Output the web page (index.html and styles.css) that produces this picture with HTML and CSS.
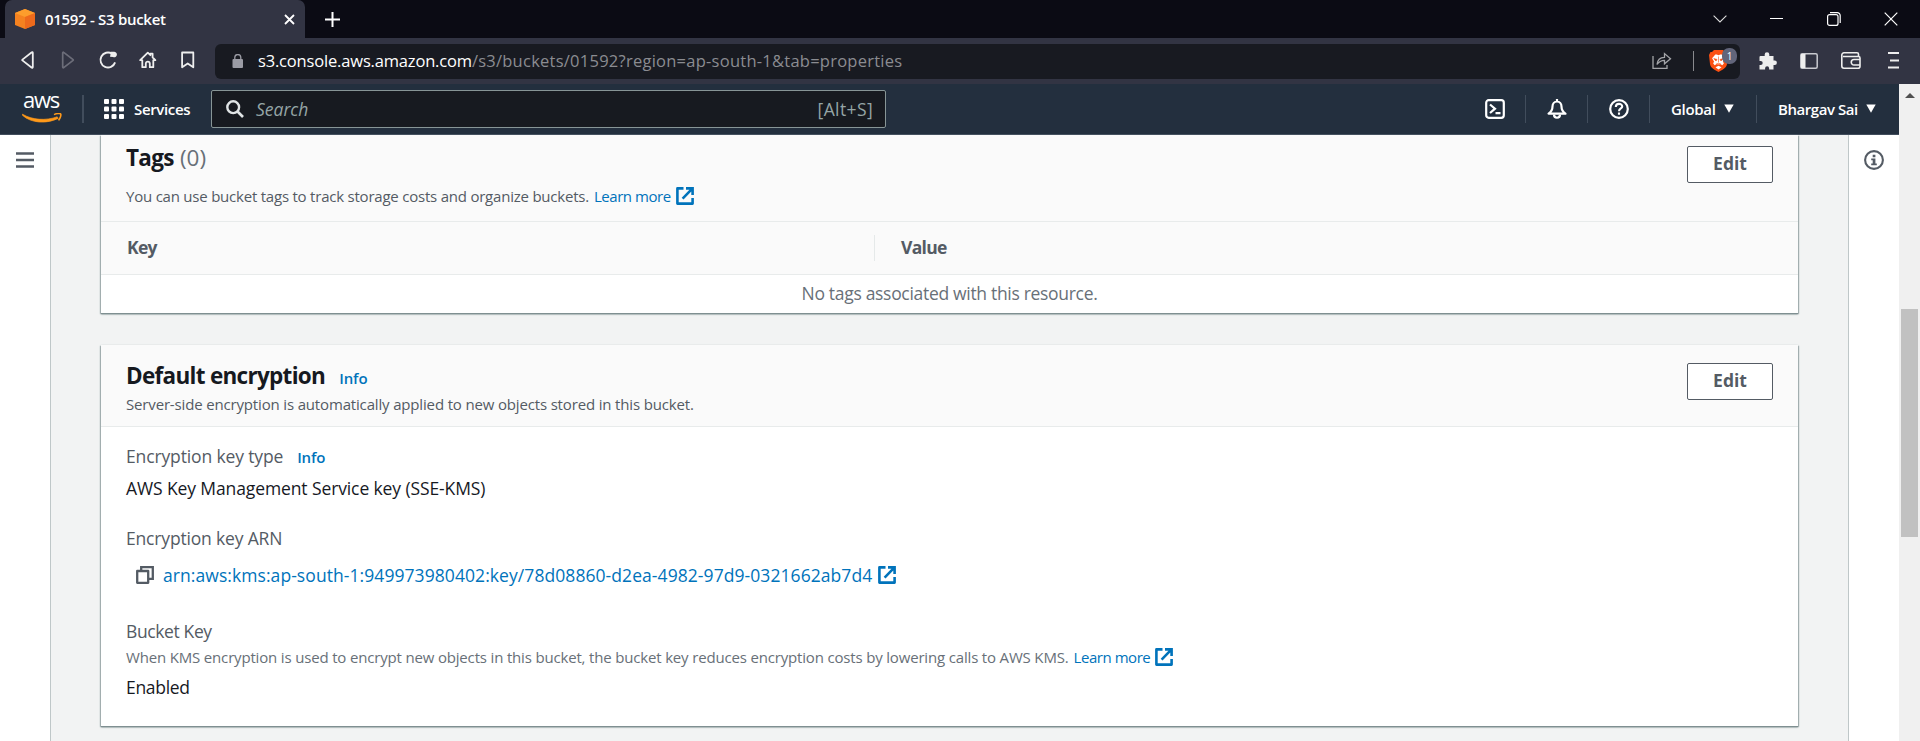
FILE: index.html
```html
<!DOCTYPE html>
<html lang="en">
<head>
<meta charset="utf-8">
<title>01592 - S3 bucket</title>
<link rel="stylesheet" href="styles.css">
</head>
<body>
<svg class="defs" aria-hidden="true">
  <symbol id="external" viewBox="0 0 18 18">
    <path d="M7.5 1.4H1.4v15.2h15.2V11" fill="none" stroke="currentColor" stroke-width="2.6" stroke-linejoin="round"/>
    <path d="M10 1.4h6.6V8M16.3 1.7 6.6 11.6" fill="none" stroke="currentColor" stroke-width="2.6"/>
  </symbol>
  <symbol id="caret" viewBox="0 0 10 9"><path d="M.3.5h9.4L5 8.7z" fill="#fff"/></symbol>
</svg>

<div class="tabstrip">
  <div class="tab">
    <svg class="favicon" width="20" height="20" viewBox="0 0 20 20">
      <path d="M10 0 20 4v12l-10 4L0 16V4z" fill="#f58220"/>
      <path d="M10 0 20 4 10 8 0 4z" fill="#fd9d2c"/>
      <path d="M20 4v12l-10 4V8z" fill="#ee6a1c"/>
    </svg>
    <span class="tab-title">01592 - S3 bucket</span>
    <svg class="tab-close" width="11" height="11" viewBox="0 0 11 11"><path d="M1 1l9 9M10 1l-9 9" stroke="#fff" stroke-width="1.8"/></svg>
  </div>
  <svg class="new-tab" width="15" height="15" viewBox="0 0 15 15"><path d="M7.5 0v15M0 7.5h15" stroke="#fff" stroke-width="2"/></svg>
  <div class="window-controls">
    <svg width="14" height="8" viewBox="0 0 14 8"><path d="M.6.6 7 7 13.4.6" fill="none" stroke="#ddd" stroke-width="1.1"/></svg>
    <svg width="13" height="14" viewBox="0 0 13 14"><path d="M0 6.5h13" stroke="#fff"/></svg>
    <svg width="14" height="14" viewBox="0 0 14 14"><rect x=".6" y="2.6" width="10.4" height="10.8" rx="2" fill="none" stroke="#fff" stroke-width="1.2"/><path d="M3 .6h7.2a3 3 0 0 1 3 3V11" fill="none" stroke="#fff" stroke-width="1.2"/></svg>
    <svg width="14" height="14" viewBox="0 0 14 14"><path d="M.7.7l12.6 12.6M13.3.7.7 13.3" stroke="#fff" stroke-width="1.2"/></svg>
  </div>
</div>

<div class="toolbar">
  <div class="browser-nav">
    <svg width="20" height="20" viewBox="0 0 20 20"><path d="M14.8 2.7v14.6a.6.6 0 0 1-1 .4L4.4 10.400a.5.5 0 0 1 0-.8l9.400-7.300a.6.6 0 0 1 1 .4z" fill="none" stroke="#eee" stroke-width="1.8"/></svg>
    <svg width="20" height="20" viewBox="0 0 20 20"><path d="M4.700 2.700v14.600a.6.6 0 0 0 1 .4l9.400-7.300a.5.5 0 0 0 0-.8L5.700 2.300a.6.6 0 0 0-1 .4z" fill="none" stroke="#6c6d79" stroke-width="1.700"/></svg>
    <svg width="20" height="20" viewBox="0 0 20 20"><path d="M14 3.600A7.500 7.500 0 1 0 17.100 12.400" fill="none" stroke="#eee" stroke-width="1.900"/><path d="M13 1.800h2.500a2.800 2.800 0 1 1-.5 5.300l-3-.3z" fill="#eee"/></svg>
    <svg width="20" height="20" viewBox="0 0 20 20"><path d="M2.200 10.200 9.800 2.700l2.600 2.500V3.700h2.200v3.700l2.800 2.800h-2.100v7h-3.500v-3.600a2 2 0 0 0-4 0v3.600H4.300v-7z" fill="none" stroke="#eee" stroke-width="1.800" stroke-linejoin="round"/></svg>
    <svg width="20" height="20" viewBox="0 0 20 20"><path d="M4.100 2.500h11.200v14.800L9.700 13.400l-5.600 3.900z" fill="none" stroke="#eee" stroke-width="1.800" stroke-linejoin="round"/></svg>
  </div>
  <div class="address">
    <svg class="lock" width="12" height="14" viewBox="0 0 12 14"><rect x=".5" y="5" width="10.500" height="9" rx="1" fill="#9b9ca5"/><path d="M2.800 5.500V3.600a3 3 0 0 1 6 0v1.900" fill="none" stroke="#9b9ca5" stroke-width="1.300"/></svg>
    <span class="host">s3.console.aws.amazon.com</span><span class="path">/s3/buckets/01592?region=ap-south-1&amp;tab=properties</span>
    <svg class="share" width="20" height="18" viewBox="0 0 20 18"><path d="M1 4v12.300h14V13M5 12.500c.4-4.600 3-7 7.500-7.200V1.600l6 5.200-6 5V8.300c-3.600 0-5.700 1.400-7.500 4.200z" fill="none" stroke="#a3a4a8" stroke-width="1.300"/></svg>
    <span class="address-divider"></span>
    <div class="shield">
      <svg width="19" height="22" viewBox="0 0 19 22"><path d="M5 0h9l2 2h1.500L19 5l-1 9c-.5 3-2 4.500-8.500 8C3 18.500 1.500 17 1 14L0 5l1.500-3H3z" fill="#fb5012"/><path d="M6.300 4.600h1.500l1.700.7 1.700-.7h1.500l3.200 3.700-2 3.500 1 1.400-1.500 2-2.200-1.200-1.700.9-1.700-.9-2.200 1.200-1.500-2 1-1.400-2-3.500zM9.500 15.700l3 1.600-3 2.200-3-2.200z" fill="#fff"/><path d="M4.800 8.600l3.200.8-1 1.600zM14.200 8.600l-3.200.8 1 1.600zM9.500 6.500v6M7.500 13.500l2 1 2-1" fill="#fb5012" stroke="#fb5012" stroke-width=".6"/></svg>
      <span class="badge">1</span>
    </div>
  </div>
  <div class="extensions">
    <svg width="18" height="18" viewBox="0 0 18 18"><path d="M1.500 4h4.200V2.500a2.300 2.300 0 0 1 4.600 0V4h4.200v4.500h1.200a2.200 2.200 0 0 1 0 4.400h-1.200V17.500h-4.400v-1.300a2 2 0 0 0-4 0v1.300H.5V13h1.200a2 2 0 0 0 0-4H.5V5a1 1 0 0 1 1-1z" fill="#eee"/></svg>
    <svg width="18" height="16" viewBox="0 0 18 16"><rect x=".8" y=".8" width="16.400" height="14.400" rx="1.500" fill="none" stroke="#c9cad0" stroke-width="1.500"/><path d="M1 1h4.500v14H1z" fill="#eee"/></svg>
    <svg width="20" height="17" viewBox="0 0 20 17"><path d="M17.500 5V2.300a1.500 1.500 0 0 0-1.500-1.500H3A2.200 2.200 0 0 0 .8 3v11A2.200 2.200 0 0 0 3 16.200h14a2 2 0 0 0 2-2V6a1.500 1.500 0 0 0-1.500-1.500H2M19 7.500h-6a2.500 2.500 0 0 0 0 5.500h6" fill="none" stroke="#eee" stroke-width="1.600"/></svg>
    <svg class="menu" width="11" height="17" viewBox="0 0 11 17"><path d="M0 1h11M2 8.500h9M0 15.500h11" stroke="#eee" stroke-width="1.800"/></svg>
  </div>
</div>

<div class="viewport">
  <div class="console">
    <header class="topnav">
      <div class="aws-logo">
        <span class="aws-word">aws</span>
        <svg class="smile" width="40" height="10" viewBox="0 0 40 10"><path d="M.5 1.200C10 7 24 8 35.200 3.800l1 1.600C25 11 9 10.500.2 2z" fill="#ff9a1a" stroke="#ff9a1a" stroke-width=".7"/><path d="M32 1.600c3-1.400 6-1.200 6.700-.6.500 1-.3 4.500-2.200 6.300" fill="none" stroke="#ff9a1a" stroke-width="1.600"/></svg>
      </div>
      <span class="nav-divider bold"></span>
      <svg class="grid-icon" width="20" height="20" viewBox="0 0 20 20" fill="#fff"><rect width="5" height="5" rx="1"/><rect x="7.500" width="5" height="5" rx="1"/><rect x="15" width="5" height="5" rx="1"/><rect y="7.500" width="5" height="5" rx="1"/><rect x="7.500" y="7.500" width="5" height="5" rx="1"/><rect x="15" y="7.500" width="5" height="5" rx="1"/><rect y="15" width="5" height="5" rx="1"/><rect x="7.500" y="15" width="5" height="5" rx="1"/><rect x="15" y="15" width="5" height="5" rx="1"/></svg>
      <span class="nav-text services">Services</span>
      <div class="search">
        <svg width="18" height="18" viewBox="0 0 18 18"><circle cx="7.200" cy="7.200" r="5.900" fill="none" stroke="#e0e4e6" stroke-width="2.400"/><path d="M11.500 11.500l5.500 5.500" stroke="#e0e4e6" stroke-width="2.600"/></svg>
        <span class="placeholder">Search</span>
        <span class="shortcut">[Alt+S]</span>
      </div>
      <div class="nav-right">
        <svg class="nav-icon first" width="20" height="20" viewBox="0 0 20 20"><rect x="1.200" y="1.200" width="17.600" height="17.600" rx="2.500" fill="none" stroke="#fff" stroke-width="2.200"/><path d="M5 5.500 10 9.700 5 14M10.500 14.200h5" fill="none" stroke="#fff" stroke-width="2.200"/></svg>
        <span class="nav-divider"></span>
        <svg class="nav-icon" width="20" height="20" viewBox="0 0 20 20"><path d="M1.500 14.600c3-1.700 4-3.600 4-7C5.500 4.500 7.500 2.500 10 2.500s4.500 2 4.500 5.100c0 3.400 1 5.300 4 7zM10 0v3" fill="none" stroke="#fff" stroke-width="2.200" stroke-linejoin="round"/><path d="M7 15.500c0 4.300 6 4.300 6 0" fill="none" stroke="#fff" stroke-width="2.200"/></svg>
        <span class="nav-divider"></span>
        <svg class="nav-icon" width="20" height="20" viewBox="0 0 20 20"><circle cx="10" cy="10" r="8.800" fill="none" stroke="#fff" stroke-width="2.200"/><path d="M6.800 8c0-4.200 6.400-4 6.400-.5 0 2-3.200 2-3.200 4.700M10 13.600v2.200" fill="none" stroke="#fff" stroke-width="2.100"/></svg>
        <span class="nav-divider"></span>
        <span class="nav-text region">Global</span>
        <svg class="caret" width="10" height="9"><use href="#caret"/></svg>
        <span class="nav-divider"></span>
        <span class="nav-text account">Bhargav Sai</span>
        <svg class="caret" width="10" height="9"><use href="#caret"/></svg>
      </div>
    </header>

    <div class="workspace">
      <aside class="rail left">
        <svg width="18" height="16" viewBox="0 0 18 16"><path d="M0 1.500h18M0 8h18M0 14.500h18" stroke="#545b64" stroke-width="2.400"/></svg>
      </aside>
      <main class="content">
        <section class="card tags">
          <div class="card-head">
            <div>
              <h2 class="heading">Tags <span class="count">(0)</span></h2>
              <p class="description"><span class="tags-copy">You can use bucket tags to track storage costs and organize buckets.</span><a class="learn">Learn more</a><svg class="external" width="18" height="18"><use href="#external"/></svg></p>
            </div>
            <button class="edit">Edit</button>
          </div>
          <div class="table-head">
            <div class="col-key">Key</div>
            <div class="col-value">Value</div>
          </div>
          <div class="empty">No tags associated with this resource.</div>
        </section>

        <section class="card encryption">
          <div class="card-head">
            <div>
              <h2 class="heading">Default encryption<a class="info">Info</a></h2>
              <p class="description">Server-side encryption is automatically applied to new objects stored in this bucket.</p>
            </div>
            <button class="edit">Edit</button>
          </div>
          <div class="card-body">
            <div class="label">Encryption key type<a class="info">Info</a></div>
            <div class="value type-value">AWS Key Management Service key (SSE-KMS)</div>
            <div class="label arn-label">Encryption key ARN</div>
            <div class="arn">
              <svg width="18" height="18" viewBox="0 0 18 18"><path d="M5.200 4V1.200h11.600v11.600H13" fill="none" stroke="#545b64" stroke-width="2.300"/><rect x="1.200" y="5" width="11" height="11.800" fill="none" stroke="#545b64" stroke-width="2.300" stroke-linejoin="round"/></svg>
              <a class="arn-link">arn:aws:kms:ap-south-1:949973980402:key/78d08860-d2ea-4982-97d9-0321662ab7d4</a>
              <svg class="external" width="18" height="18"><use href="#external"/></svg>
            </div>
            <div class="label bucket-label">Bucket Key</div>
            <p class="hint">When KMS encryption is used to encrypt new objects in this bucket, the bucket key reduces encryption costs by lowering calls to AWS KMS.<a class="learn">Learn more</a><svg class="external" width="18" height="18"><use href="#external"/></svg></p>
            <div class="value enabled">Enabled</div>
          </div>
        </section>
      </main>
      <aside class="rail right">
        <svg width="20" height="20" viewBox="0 0 20 20"><circle cx="10" cy="10" r="8.900" fill="none" stroke="#545b64" stroke-width="2.100"/><path d="M8.700 4.800h2.700v2.400H8.700zM7.200 8.400h4.200v5h1.400v1.800H7.200v-1.800h1.500v-3.200H7.200z" fill="#545b64"/></svg>
      </aside>
    </div>
  </div>
  <div class="scrollbar">
    <svg width="10" height="5" viewBox="0 0 10 5"><path d="M0 5 5 0l5 5z" fill="#505050"/></svg>
    <div class="thumb"></div>
  </div>
</div>
</body>
</html>
```

FILE: styles.css
```css
* { box-sizing: border-box; }
body { margin: 0; height: 741px; overflow: hidden; display: flex; flex-direction: column; font-family: "Open Sans", "Noto Sans", sans-serif; color: #16191f; background: #f2f3f3; }
h2, p { margin: 0; }
svg { display: block; flex: none; }
.defs { position: absolute; width: 0; height: 0; }

/* Browser chrome */
.tabstrip { height: 38px; flex: none; background: #0b0b14; display: flex; align-items: center; padding-left: 5px; }
.tab { width: 300px; height: 38px; background: #323443; border-radius: 7px 7px 0 0; display: flex; align-items: center; padding: 0 10px 0 10px; }
.tab-title { margin-left: 10px; padding-bottom: 1px; flex: 1; font-size: 15px; line-height: 20px; font-weight: 600; letter-spacing: -0.3px; color: #fff; }
.new-tab { margin-left: 20px; }
.window-controls { margin-left: auto; display: flex; align-items: center; width: 185px; justify-content: space-between; margin-right: 22px; }
.toolbar { height: 46px; flex: none; background: #323443; display: flex; align-items: center; }
.browser-nav { display: flex; gap: 20px; width: 215px; padding-left: 18px; margin-top: -2px; }
.address { width: 1525px; height: 35px; background: #181a21; border-radius: 6px; display: flex; align-items: center; font-size: 16.5px; line-height: 24px; }
.lock { margin: 0 14px 0 17px; }
.host { color: #fff; letter-spacing: -0.17px; white-space: nowrap; padding-bottom: 1px; }
.path { color: #8b8c91; letter-spacing: 0.25px; white-space: nowrap; padding-bottom: 1px; }
.share { margin-left: auto; }
.address-divider { width: 1px; height: 20px; background: #898a8e; margin: 0 15px 0 21px; }
.shield { position: relative; width: 31px; height: 23px; }
.badge { position: absolute; left: 13px; top: -2px; width: 15px; height: 16px; border-radius: 7px; background: #62657a; color: #fff; font-size: 10px; line-height: 16px; text-align: center; }
.extensions { display: flex; align-items: center; gap: 23px; margin: -1px 0 0 19px; }
.menu { margin-left: 4px; }

/* Page viewport */
.viewport { flex: 1; min-height: 0; display: flex; }
.console { width: 1899px; display: flex; flex-direction: column; }
.scrollbar { width: 21px; background: #f0f0f0; display: flex; flex-direction: column; align-items: center; padding-top: 9px; }
.thumb { width: 17px; height: 228px; background: #c1c1c1; margin-top: 211px; }
.topnav { height: 51px; flex: none; background: #232f3e; border-bottom: 1px solid #414d5c; display: flex; align-items: center; color: #fff; }
.aws-logo { width: 40px; margin-left: 22px; height: 29px; display: flex; flex-direction: column; }
.aws-word { font-size: 22px; line-height: 18px; font-weight: 500; letter-spacing: -1.3px; padding-left: 1px; margin-top: -5px; }
.smile { margin-top: 5px; }
.nav-divider { width: 1px; height: 28px; background: #414d5c; }
.nav-divider.bold { width: 2px; margin-left: 20px; }
.grid-icon { margin-left: 20px; }
.nav-text { font-size: 15px; line-height: 20px; font-weight: 600; white-space: nowrap; }
.services { width: 87px; padding-left: 10px; letter-spacing: -0.35px; }
.search { width: 675px; height: 38px; border: 1px solid #879596; border-radius: 2px; background: #171a20; display: flex; align-items: center; padding: 0 12px 1px 14px; font-size: 17.5px; line-height: 24px; color: #95a5a6; }
.placeholder { font-style: italic; margin-left: 12px; }
.shortcut { margin-left: auto; letter-spacing: 0.38px; }
.nav-right { margin-left: auto; display: flex; align-items: center; padding-right: 23px; }
.nav-icon { margin: 0 20px 0 21px; }
.region { width: 53px; margin-left: 21px; letter-spacing: -0.3px; }
.account { width: 88px; margin-left: 21px; letter-spacing: -0.45px; }
.caret { margin-top: -1px; }
.region + .caret { margin-right: 22px; }

.workspace { flex: 1; min-height: 0; display: flex; background: #f2f3f3; }
.rail { width: 51px; background: #fff; flex: none; }
.left { border-right: 1px solid #bfc7c8; padding: 17px 0 0 16px; }
.right { border-left: 1px solid #bfc7c8; padding: 15px 0 0 15px; }
.content { flex: 1; padding: 0 50px; }

.card { background: #fff; box-shadow: 0 1px 1px #7f8f91, 0 1px 2px #7f8f91, 1px 1px 1px #bfc7c8, -1px 1px 1px #bfc7c8; }
.card-head { background: #fafafa; border-bottom: 1px solid #e8ebeb; display: flex; justify-content: space-between; padding: 0 25px; }
.heading { font-size: 22.5px; line-height: 30px; height: 30px; font-weight: 700; letter-spacing: -0.7px; }
.count { font-weight: 400; color: #687078; letter-spacing: 0; margin-left: 1px; }
.description, .hint { font-size: 15px; line-height: 20px; color: #545b64; letter-spacing: -0.16px; display: flex; align-items: center; white-space: nowrap; }
.hint { color: #687078; letter-spacing: -0.17px; }
.learn { color: #0073bb; margin-left: 5px; letter-spacing: -0.45px; }
.external { color: #0073bb; margin-left: 5px; }
.info { font-size: 15px; line-height: 1; font-weight: 600; color: #0073bb; margin-left: 14px; letter-spacing: -0.1px; }
.edit { width: 86px; height: 37px; border: 1px solid #545b64; border-radius: 2px; background: #fff; color: #545b64; font: 700 17.5px/24px "Open Sans", sans-serif; padding: 0 0 4px; }

.tags .card-head { height: 87px; padding-top: 8px; }
.tags .description { margin-top: 13px; }
.tags .edit { margin-top: 3px; }
.tags-copy { letter-spacing: -0.22px; }
.table-head { height: 53px; display: flex; align-items: center; background: #fafafa; border-bottom: 1px solid #e8ebeb; font-size: 17.5px; line-height: 24px; font-weight: 700; color: #545b64; letter-spacing: -0.7px; }
.col-key { width: 773px; height: 26px; padding-left: 26px; }
.col-value { border-left: 1px solid #e5e9e9; padding-left: 26px; height: 26px; }
.empty { height: 38px; line-height: 37px; text-align: center; font-size: 17.5px; color: #687078; letter-spacing: -0.31px; }

.encryption { margin-top: 32px; }
.encryption .card-head { height: 82px; padding-top: 16px; }
.encryption .description { margin-top: 3px; }
.encryption .edit { margin-top: 2px; }
.card-body { padding: 17px 25px 27px; font-size: 17.5px; line-height: 24px; }
.label { height: 24px; color: #545b64; letter-spacing: -0.14px; }
.type-value { margin-top: 8px; letter-spacing: -0.11px; }
.arn-label { margin-top: 26px; letter-spacing: -0.17px; }
.arn { display: flex; align-items: center; height: 24px; margin-top: 13px; padding-left: 10px; }
.arn-link { color: #0073bb; margin-left: 9px; letter-spacing: 0.07px; }
.arn .external { margin-left: 6px; }
.bucket-label { margin-top: 32px; letter-spacing: -0.38px; }
.hint { margin-top: 4px; }
.enabled { margin-top: 8px; letter-spacing: -0.3px; }
```
